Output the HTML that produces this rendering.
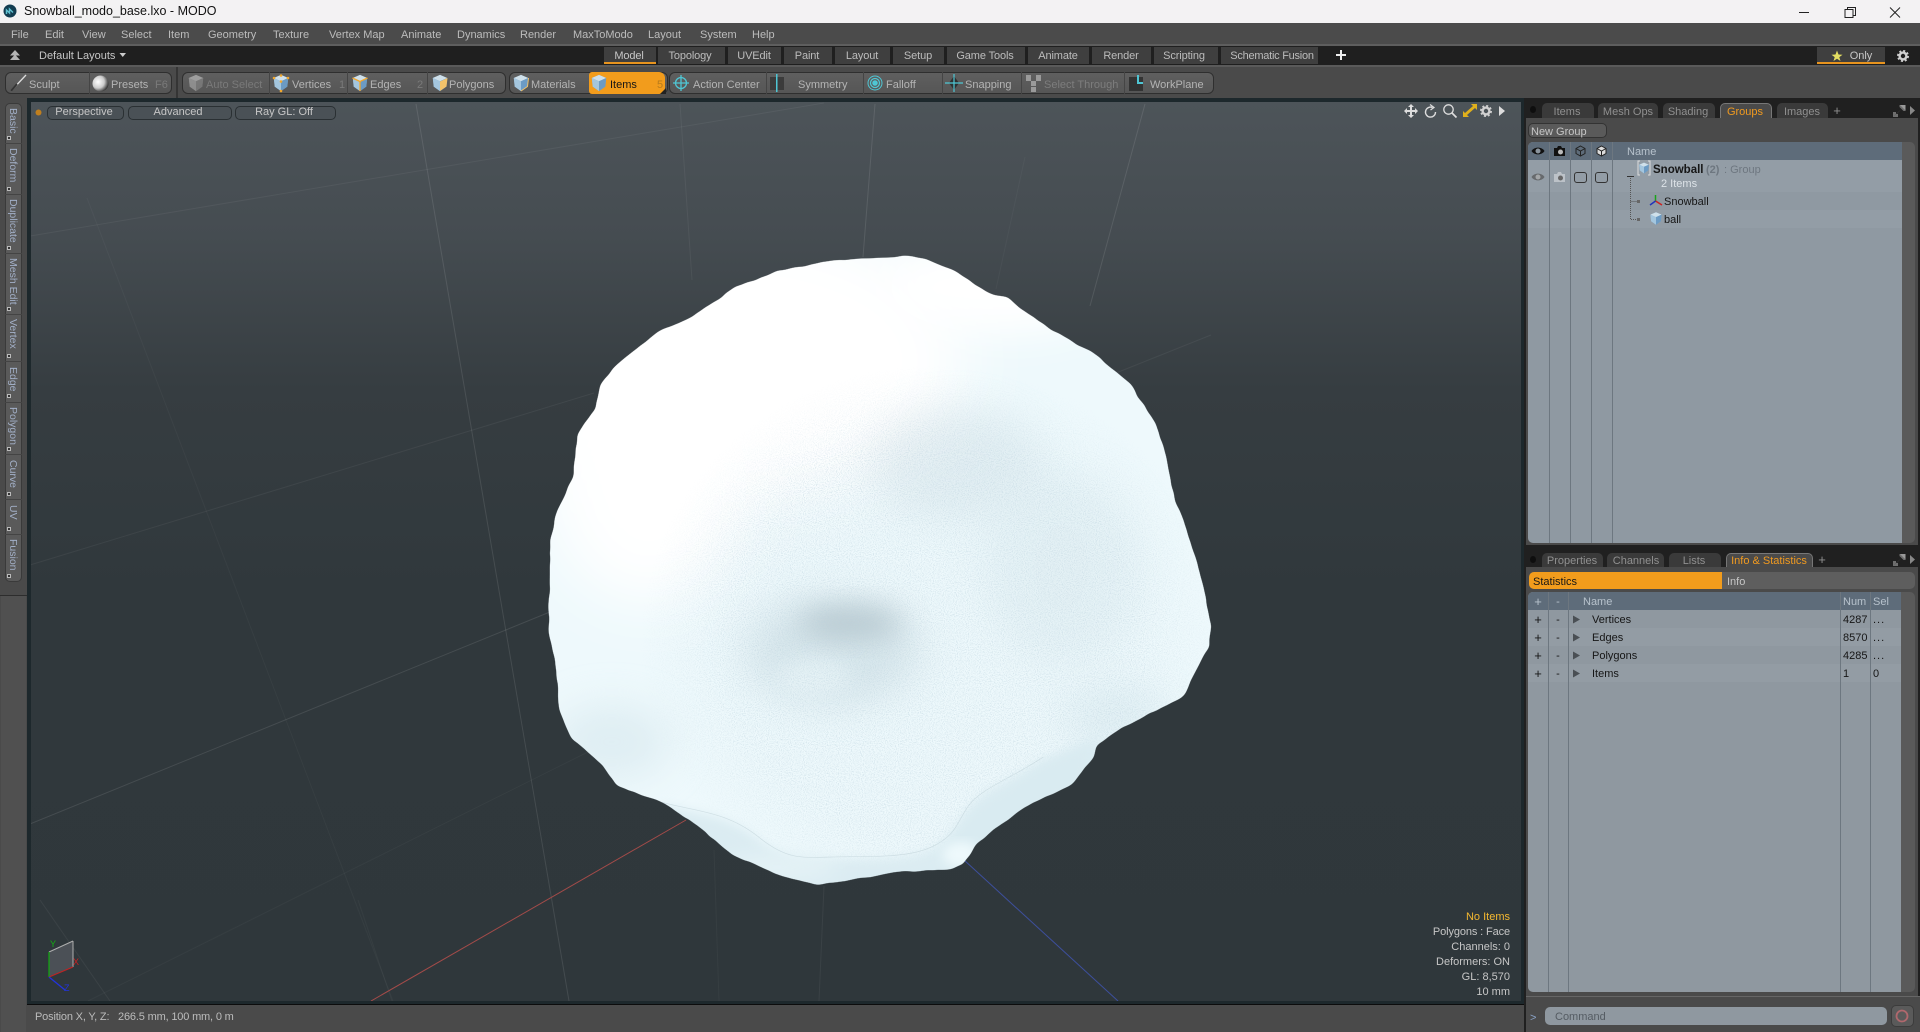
<!DOCTYPE html>
<html><head><meta charset="utf-8"><title>Snowball_modo_base.lxo - MODO</title>
<style>
html,body{margin:0;padding:0;background:#3a3a3a}
#r{position:relative;width:1920px;height:1032px;overflow:hidden;background:#4a4a4a;font:11px "Liberation Sans",sans-serif;color:#bcbcbc}
.a{position:absolute}
.t{position:absolute;white-space:nowrap;line-height:14px;margin-top:1px}
.c{transform:translateX(-50%)}
.w{color:#c6c6c6}
.d{color:#7a7a7a}
.k{color:#161616}
.lt{letter-spacing:-.12px}
.ltab{position:absolute;left:8px;writing-mode:vertical-rl;white-space:nowrap;color:#a3b0c8;line-height:10px;font-size:10.5px}
.sq{position:absolute;left:7px;width:2px;height:2px;border:1px solid #bbb;background:#333}
.sp{position:absolute;top:72px;height:22px;width:1px;background:#454545}
.tb{position:absolute;top:72px;height:20px;background:linear-gradient(#5f5f5f,#565656);border:1px solid #2f2f2f;border-radius:6px}
.ls{position:absolute;top:47px;height:17px;background:#3f3f3f}
.pill{position:absolute;top:106px;height:12px;border:1px solid #2a3033;background:#4a5156;border-radius:5px}
.rt{position:absolute;background:#3a3a3a;border-radius:5px 5px 0 0}
.col{position:absolute;width:1px;background:#6d7780}
svg{position:absolute;overflow:visible}
</style></head><body><div id="r">

<svg width="0" height="0" style="left:0;top:0">
<defs>
<symbol id="cube" viewBox="0 0 20 20" overflow="visible">
<polygon points="10,1 18,4.5 17,14 10,19 3,14 2,4.5" fill="#7faacd"/>
<polygon points="10,1 18,4.5 10,8 2,4.5" fill="#cfe0ea"/>
<polygon points="10,8 18,4.5 17,14 10,19" fill="#6c9bc4"/>
<polygon points="10,8 2,4.5 3,14 10,19" fill="#a4c6de"/>
</symbol>
<symbol id="gear" viewBox="0 0 12 12" overflow="visible">
<circle cx="6" cy="6" r="3.4" fill="none" stroke="#d0d0d0" stroke-width="2.4"/>
<circle cx="6" cy="6" r="5" fill="none" stroke="#d0d0d0" stroke-width="2" stroke-dasharray="2 1.93"/>
</symbol>
<symbol id="exp" viewBox="0 0 14 14" overflow="visible">
<path d="M1 13V8h3v2.500L9.500 5 7.500 3V1h6v6h-2l-2-2M1 13h5v-3H4" fill="#6f6f6f"/>
<path d="M8 1h5.500v5.500L11.500 4.500 9.500 2.500z" fill="#9a9a9a"/>
</symbol>
<filter id="organic" x="-5%" y="-5%" width="110%" height="110%" color-interpolation-filters="sRGB">
<feTurbulence type="fractalNoise" baseFrequency="0.04" numOctaves="3" seed="7" result="n"/>
<feDisplacementMap in="SourceGraphic" in2="n" scale="6" xChannelSelector="R" yChannelSelector="G" result="d"/>
<feGaussianBlur in="d" stdDeviation="6"/>
<feComponentTransfer><feFuncA type="linear" slope="10" intercept="-4.5"/></feComponentTransfer>
</filter>
<mask id="ballmask" maskUnits="userSpaceOnUse" x="-50" y="-50" width="1700" height="1700">
<path fill="#fff" filter="url(#organic)" d="M680 70 L760 65 840 60 880 66 950 95 990 125 1030 150 1060 155 1150 225 1250 285 1330 355 1385 450 1405 510 1425 620 1445 670 1475 770 1490 830 1505 915 1500 960 1465 1030 1445 1075 1300 1155 1255 1190 1250 1215 1200 1280 1100 1330 1030 1385 990 1420 965 1465 930 1475 820 1480 740 1495 650 1510 570 1490 460 1440 390 1375 310 1320 210 1280 180 1235 110 1170 85 1105 80 1020 62 920 65 800 65 720 80 650 115 570 125 470 165 410 175 355 210 310 300 235 375 200 470 130 560 95Z"/>
</mask>
<filter id="b20" x="-60%" y="-60%" width="220%" height="220%"><feGaussianBlur stdDeviation="22"/></filter>
<filter id="b30" x="-60%" y="-60%" width="220%" height="220%"><feGaussianBlur stdDeviation="32"/></filter>
<filter id="b40" x="-60%" y="-60%" width="220%" height="220%"><feGaussianBlur stdDeviation="45"/></filter>
<filter id="b70" x="-50%" y="-50%" width="200%" height="200%"><feGaussianBlur stdDeviation="70"/></filter>
<filter id="b10" x="-20%" y="-20%" width="140%" height="140%"><feGaussianBlur stdDeviation="12"/></filter>
<filter id="grain" x="0" y="0" width="100%" height="100%">
<feTurbulence type="fractalNoise" baseFrequency="0.42" numOctaves="2" seed="4"/>
<feColorMatrix values="0 0 0 0 .5  0 0 0 0 .64  0 0 0 0 .72  3.2 0 0 0 -1.45"/>
</filter>
<radialGradient id="gm" gradientUnits="userSpaceOnUse" cx="900" cy="950" r="640">
<stop offset="0" stop-color="#fff"/><stop offset=".7" stop-color="#fff"/><stop offset="1" stop-color="#000"/>
</radialGradient>
<mask id="gmask" maskUnits="userSpaceOnUse" x="0" y="0" width="1568" height="1568"><rect width="1568" height="1568" fill="url(#gm)"/></mask>
<linearGradient id="vp" x1="0" y1="0" x2="0" y2="1">
<stop offset="0" stop-color="#4d5459"/><stop offset=".15" stop-color="#454c51"/><stop offset=".32" stop-color="#363d41"/><stop offset=".55" stop-color="#30383c"/><stop offset="1" stop-color="#2f373b"/>
</linearGradient>
</defs>
</svg>

<!-- title bar -->
<div class="a" style="left:0;top:0;width:1920px;height:23px;background:#f3f2f3"></div>
<svg style="left:3px;top:4px" width="14" height="14" viewBox="0 0 14 14"><circle cx="7" cy="7" r="6.500" fill="#123c50"/><path d="M3.500 10V6l3 3V5l3.500 3.500" fill="none" stroke="#5fc0d0" stroke-width="1.500"/></svg>
<div class="t" style="left:24px;top:3px;font-size:12.500px;color:#111">Snowball_modo_base.lxo - MODO</div>
<svg style="left:1795px;top:4px" width="120" height="16" fill="none" stroke="#222" stroke-width="1">
<path d="M4 8.500H14"/>
<path d="M50 5.500h8v8h-8zM52.500 5.500V3.500H60.500V11.500H58"/>
<path d="M95 3.500L105 13.500M105 3.500L95 13.500"/>
</svg>

<!-- menu bar -->
<div class="a" style="left:0;top:23px;width:1920px;height:22px;background:#4b4b4b"></div>
<div class="a" style="left:0;top:44px;width:1920px;height:2px;background:#5e5e5e"></div>
<span class="t" style="left:11px;top:27px">File</span>
<span class="t" style="left:45px;top:27px">Edit</span>
<span class="t" style="left:82px;top:27px">View</span>
<span class="t" style="left:121px;top:27px">Select</span>
<span class="t" style="left:168px;top:27px">Item</span>
<span class="t" style="left:208px;top:27px">Geometry</span>
<span class="t" style="left:273px;top:27px">Texture</span>
<span class="t" style="left:329px;top:27px">Vertex Map</span>
<span class="t" style="left:401px;top:27px">Animate</span>
<span class="t" style="left:457px;top:27px">Dynamics</span>
<span class="t" style="left:520px;top:27px">Render</span>
<span class="t" style="left:573px;top:27px">MaxToModo</span>
<span class="t" style="left:648px;top:27px">Layout</span>
<span class="t" style="left:700px;top:27px">System</span>
<span class="t" style="left:752px;top:27px">Help</span>

<!-- layout bar -->
<div class="a" style="left:0;top:46px;width:1920px;height:19px;background:#1f1f1f"></div>
<div class="a" style="left:0;top:65px;width:1920px;height:2px;background:#5a5a5a"></div>
<svg style="left:9px;top:49px" width="12" height="13"><path d="M6 1L11 6.500H1zM6 5.500L11 11H1z" fill="#b5b5b5"/></svg>
<span class="t w" style="left:39px;top:48px">Default Layouts</span>
<svg style="left:119px;top:52px" width="8" height="6"><path d="M0.500 1H7L3.750 5z" fill="#ccc"/></svg>
<div class="ls" style="left:604px;width:52px"></div>
<div class="a" style="left:604px;top:62px;width:52px;height:2px;background:#e8941e"></div>
<div class="ls" style="left:658px;width:67px"></div>
<div class="ls" style="left:728px;width:53px"></div>
<div class="ls" style="left:784px;width:48px"></div>
<div class="ls" style="left:835px;width:55px"></div>
<div class="ls" style="left:893px;width:51px"></div>
<div class="ls" style="left:947px;width:78px"></div>
<div class="ls" style="left:1028px;width:61px"></div>
<div class="ls" style="left:1092px;width:59px"></div>
<div class="ls" style="left:1154px;width:64px"></div>
<div class="ls" style="left:1221px;width:97px"></div>
<span class="t c w lt" style="left:629px;top:48px">Model</span>
<span class="t c lt" style="left:690px;top:48px">Topology</span>
<span class="t c lt" style="left:754px;top:48px">UVEdit</span>
<span class="t c lt" style="left:807px;top:48px">Paint</span>
<span class="t c lt" style="left:862px;top:48px">Layout</span>
<span class="t c lt" style="left:918px;top:48px">Setup</span>
<span class="t c lt" style="left:985px;top:48px">Game Tools</span>
<span class="t c lt" style="left:1058px;top:48px">Animate</span>
<span class="t c lt" style="left:1121px;top:48px">Render</span>
<span class="t c lt" style="left:1184px;top:48px">Scripting</span>
<span class="t c lt" style="left:1272px;top:48px;letter-spacing:-.25px">Schematic Fusion</span>
<svg style="left:1335px;top:49px" width="12" height="12"><path d="M6 1v10M1 6h10" stroke="#eee" stroke-width="2"/></svg>
<div class="ls" style="left:1817px;width:68px"></div>
<div class="a" style="left:1817px;top:62px;width:68px;height:2px;background:#e8941e"></div>
<svg style="left:1831px;top:50px" width="12" height="12"><path d="M6 0.500L7.500 4.500 11.500 4.700 8.300 7.100 9.500 11 6 8.700 2.500 11 3.700 7.100 0.500 4.700 4.500 4.500z" fill="#e3de62"/></svg>
<span class="t c w" style="left:1861px;top:48px">Only</span>
<svg style="left:1897px;top:50px" width="12" height="12"><use href="#gear" width="12" height="12"/></svg>

<!-- toolbar -->
<div class="a" style="left:0;top:67px;width:1920px;height:31px;background:#4a4a4a"></div>
<div class="a" style="left:176px;top:67px;width:2px;height:31px;background:#353535"></div>
<div class="tb" style="left:5px;width:165px"></div>
<div class="tb" style="left:182px;width:322px"></div>
<div class="tb" style="left:509px;width:157px"></div>
<div class="tb" style="left:669px;width:543px"></div>
<div class="sp" style="left:89px"></div><div class="sp" style="left:269px"></div><div class="sp" style="left:347px"></div><div class="sp" style="left:427px"></div>
<div class="sp" style="left:766px"></div><div class="sp" style="left:863px"></div><div class="sp" style="left:942px"></div><div class="sp" style="left:1021px"></div><div class="sp" style="left:1124px"></div>
<div class="a" style="left:589px;top:72px;width:76px;height:22px;background:#f29c1c;border-radius:3px 6px 6px 3px"></div>
<svg style="left:660px;top:88px" width="6" height="6"><path d="M6 0V6H0z" fill="#222"/></svg>

<svg style="left:10px;top:74px" width="18" height="18"><path d="M1 17L16 1" stroke="#ddd" stroke-width="1.300"/><path d="M1 17L7 10" stroke="#333" stroke-width="1.800"/></svg>
<span class="t" style="left:29px;top:77px;color:#b4b4b4">Sculpt</span>
<svg style="left:92px;top:75px" width="17" height="17"><defs><radialGradient id="bl" cx=".35" cy=".4" r=".7"><stop offset="0" stop-color="#fff"/><stop offset=".55" stop-color="#ccc"/><stop offset="1" stop-color="#222"/></radialGradient></defs><circle cx="8.500" cy="8.500" r="8" fill="url(#bl)"/></svg>
<span class="t" style="left:111px;top:77px;color:#b4b4b4">Presets</span>
<span class="t d" style="left:155px;top:77px">F6</span>

<svg style="left:187px;top:74px" width="18" height="18" opacity=".5"><g style="filter:grayscale(1)"><use href="#cube" width="18" height="18"/></g></svg>
<span class="t d" style="left:206px;top:77px">Auto Select</span>
<svg style="left:272px;top:74px" width="18" height="18"><use href="#cube" width="18" height="18"/><g fill="#f2a72c"><circle cx="9" cy="1.500" r="1.300"/><circle cx="16" cy="4" r="1.300"/><circle cx="2" cy="4" r="1.300"/><circle cx="9" cy="17" r="1.300"/><circle cx="9" cy="7.500" r="1.300"/></g></svg>
<span class="t" style="left:292px;top:77px;color:#b4b4b4">Vertices</span>
<span class="t d" style="left:339px;top:77px">1</span>
<svg style="left:351px;top:74px" width="18" height="18"><use href="#cube" width="18" height="18"/><path d="M9 7.500V17M9 7.500L16.500 4M9 7.500L1.500 4" stroke="#f2a72c" stroke-width="1.300"/></svg>
<span class="t" style="left:370px;top:77px;color:#b4b4b4">Edges</span>
<span class="t d" style="left:417px;top:77px">2</span>
<svg style="left:431px;top:74px" width="18" height="18"><use href="#cube" width="18" height="18"/><polygon points="9,7.500 16.500,4 15.500,12.500 9,17" fill="#f2c26a"/></svg>
<span class="t" style="left:449px;top:77px;color:#b4b4b4">Polygons</span>
<svg style="left:512px;top:74px" width="18" height="18"><use href="#cube" width="18" height="18"/><path d="M16.500 4L15.500 12.500 9 17" stroke="#f2c26a" fill="none"/></svg>
<span class="t" style="left:531px;top:77px;color:#b4b4b4">Materials</span>
<svg style="left:590px;top:74px" width="18" height="18"><use href="#cube" width="18" height="18"/></svg>
<span class="t k" style="left:610px;top:77px">Items</span>
<span class="t" style="left:657px;top:77px;color:#b87c1c">5</span>

<svg style="left:673px;top:75px" width="16" height="16" fill="none" stroke="#4fc6d4" stroke-width="1.300"><circle cx="8" cy="8" r="5.500"/><path d="M8 0V16M0 8H16"/></svg>
<span class="t" style="left:693px;top:77px;color:#b4b4b4">Action Center</span>
<svg style="left:770px;top:74px" width="16" height="18"><rect x="0" y="3" width="14" height="13" fill="#3b3b3b"/><rect x="6" y="0" width="1.500" height="18" fill="#4fc6d4"/></svg>
<span class="t" style="left:798px;top:77px;color:#b4b4b4">Symmetry</span>
<svg style="left:867px;top:75px" width="16" height="16" fill="none" stroke="#4fc6d4"><circle cx="8" cy="8" r="7"/><circle cx="8" cy="8" r="4.500" stroke-width="1.300"/><circle cx="8" cy="8" r="2.300" fill="#4fc6d4"/></svg>
<span class="t" style="left:886px;top:77px;color:#b4b4b4">Falloff</span>
<svg style="left:945px;top:74px" width="18" height="18"><path d="M9 2L14 9 9 16 4 9z" fill="#2f2f2f"/><path d="M9 0V18M0 9H18" stroke="#4fc6d4" stroke-width="1.200"/></svg>
<span class="t" style="left:965px;top:77px;color:#b4b4b4">Snapping</span>
<svg style="left:1025px;top:74px" width="18" height="18" fill="#9a9a9a"><rect x="1" y="1" width="5" height="6"/><rect x="11" y="1" width="5" height="6"/><rect x="6" y="7" width="5" height="5"/><rect x="6" y="13" width="5" height="5"/></svg>
<span class="t" style="left:1044px;top:77px;color:#7d7d7d">Select Through</span>
<svg style="left:1129px;top:75px" width="16" height="16"><rect x="0" y="2" width="14" height="14" fill="#333"/><path d="M9 0V8H14" fill="none" stroke="#4fc6d4" stroke-width="2"/></svg>
<span class="t" style="left:1150px;top:77px;color:#b4b4b4">WorkPlane</span>

<!-- left tabs panel -->
<div class="a" style="left:0;top:98px;width:27px;height:934px;background:#4a4a4a"></div>
<div class="a" style="left:5px;top:103px;width:17px;height:479px;background:#5a5a5a;border:1px solid #3a3a3a;box-sizing:border-box;border-radius:5px"></div>
<div class="a" style="left:0;top:595px;width:27px;height:1px;background:#2d2d2d"></div>
<div class="a" style="left:1px;top:596px;width:25px;height:436px;background:#505050"></div>
<div class="a" style="left:5px;top:143px;width:17px;height:1px;background:#444"></div>
<div class="a" style="left:5px;top:194px;width:17px;height:1px;background:#444"></div>
<div class="a" style="left:5px;top:253px;width:17px;height:1px;background:#444"></div>
<div class="a" style="left:5px;top:314px;width:17px;height:1px;background:#444"></div>
<div class="a" style="left:5px;top:361px;width:17px;height:1px;background:#444"></div>
<div class="a" style="left:5px;top:402px;width:17px;height:1px;background:#444"></div>
<div class="a" style="left:5px;top:454px;width:17px;height:1px;background:#444"></div>
<div class="a" style="left:5px;top:499px;width:17px;height:1px;background:#444"></div>
<div class="a" style="left:5px;top:534px;width:17px;height:1px;background:#444"></div>
<span class="ltab" style="top:108px">Basic</span>
<span class="ltab" style="top:148px">Deform</span>
<span class="ltab" style="top:199px">Duplicate</span>
<span class="ltab" style="top:258px">Mesh Edit</span>
<span class="ltab" style="top:319px">Vertex</span>
<span class="ltab" style="top:367px">Edge</span>
<span class="ltab" style="top:407px">Polygon</span>
<span class="ltab" style="top:460px">Curve</span>
<span class="ltab" style="top:505px">UV</span>
<span class="ltab" style="top:539px">Fusion</span>
<i class="sq" style="top:136px"></i><i class="sq" style="top:187px"></i><i class="sq" style="top:246px"></i><i class="sq" style="top:307px"></i><i class="sq" style="top:354px"></i><i class="sq" style="top:394px"></i><i class="sq" style="top:447px"></i><i class="sq" style="top:492px"></i><i class="sq" style="top:527px"></i><i class="sq" style="top:574px"></i>

<!-- viewport -->
<div class="a" style="left:27px;top:98px;width:1497px;height:907px;background:#1d282c"></div>
<div class="a" style="left:31px;top:102px;width:1490px;height:899px;overflow:hidden">
<svg style="left:-31px;top:-102px" width="1920" height="1032">
<rect x="31" y="102" width="1490" height="899" fill="url(#vp)"/>
<g fill="none" stroke-width="1">
<g stroke="#fff" stroke-opacity=".1">
<path d="M416 104L569 1001"/><path d="M875 104L863 257"/><path d="M1145 104L1090 306"/>
<path d="M30 824L594 594"/>
</g>
<g stroke="#fff" stroke-opacity=".055">
<path d="M30 236L824 103"/><path d="M680 104L692 280"/><path d="M30 565L594 393"/><path d="M1116 373L1211 335"/><path d="M40 900L110 1001"/><path d="M824 886L819 1001"/>
</g>
<g stroke="#fff" stroke-opacity=".035">
<path d="M87 198L393 1001"/><path d="M88 1001L594 749"/><path d="M1025 157L996 289"/><path d="M358 900L392 1001"/><path d="M714 850L719 1001"/>
</g>
<path d="M371 1001L686 820" stroke="#a34b49"/>
<path d="M964 860L1118 1001" stroke="#3d4f9c"/>
</g>
<!-- gizmo -->
<polygon points="49,952 73,941 73,967 49,977" fill="#4b5056"/>
<path d="M49 952L73 941M73 941V967" stroke="#aeaeae" fill="none"/>
<path d="M49 952V977" stroke="#12a312" stroke-width="1.300"/>
<path d="M49 977L73 967" stroke="#c22222" stroke-width="1"/>
<path d="M49 977L65 990" stroke="#2233dd" stroke-width="1.300"/>
<!-- snowball -->
<g transform="translate(520 230) scale(.4592 .4337)">
<g mask="url(#ballmask)">
<rect x="-50" y="-50" width="1700" height="1700" fill="#eef9fc"/>
<ellipse cx="450" cy="300" rx="520" ry="330" fill="#fff" filter="url(#b70)"/>
<ellipse cx="1050" cy="130" rx="260" ry="110" fill="#fff" filter="url(#b40)"/>
<ellipse cx="280" cy="580" rx="220" ry="280" fill="#fff" filter="url(#b70)"/>
<ellipse cx="950" cy="540" rx="190" ry="130" fill="#c0d2da" opacity=".26" filter="url(#b40)"/>
<ellipse cx="1180" cy="780" rx="170" ry="220" fill="#dcebf0" opacity=".5" filter="url(#b40)"/>
<ellipse cx="680" cy="970" rx="190" ry="125" fill="#c8dae1" opacity=".6" filter="url(#b40)"/>
<ellipse cx="720" cy="905" rx="115" ry="38" fill="#a3b5bd" opacity=".6" filter="url(#b30)"/>
<ellipse cx="640" cy="1030" rx="80" ry="45" fill="#eef9fc" opacity=".6" filter="url(#b20)"/>
<ellipse cx="1300" cy="1120" rx="120" ry="70" fill="#d4e6ec" opacity=".5" filter="url(#b40)"/>
<ellipse cx="200" cy="1180" rx="130" ry="90" fill="#d0e3ea" opacity=".5" filter="url(#b40)"/>
<g mask="url(#gmask)"><rect width="1568" height="1568" filter="url(#grain)" opacity=".5"/></g>
<path d="M310 1325C380 1345 450 1345 520 1405S620 1450 720 1450 870 1445 910 1420 950 1375 975 1335 1060 1275 1140 1220L1260 1165 1320 1600 200 1600Z" fill="#dbecf2" filter="url(#b10)"/>
<path d="M990 1340L1140 1235 1250 1190 1210 1280 1100 1340 990 1450 930 1470 915 1430 960 1375Z" fill="#d9ebf1" filter="url(#b10)"/>
<ellipse cx="960" cy="1440" rx="40" ry="30" fill="#eef9fc" filter="url(#b10)"/>
<ellipse cx="560" cy="1470" rx="130" ry="30" fill="#e4f2f6" filter="url(#b20)"/>
<path d="M310 1320C380 1340 450 1340 520 1400S620 1445 720 1445 870 1440 910 1415 950 1370 975 1330 1060 1270 1140 1215" fill="none" stroke="#a4b8c0" stroke-width="1.500" opacity=".35"/>
</g>
</g>
</svg>
</div>
<div class="a" style="left:27px;top:1004px;width:1497px;height:1px;background:#0c0c0c"></div>

<!-- viewport header -->
<svg style="left:35px;top:109px" width="7" height="7"><circle cx="3.500" cy="3.500" r="3" fill="#c07f1e"/></svg>
<div class="pill" style="left:47px;width:75px"></div>
<div class="pill" style="left:128px;width:102px"></div>
<div class="pill" style="left:235px;width:99px"></div>
<span class="t c w" style="left:84px;top:104px">Perspective</span>
<span class="t c w" style="left:178px;top:104px">Advanced</span>
<span class="t c w" style="left:284px;top:104px">Ray GL: Off</span>
<svg style="left:1404px;top:104px" width="14" height="14"><path d="M7 0L10 3H8V6H11V4L14 7 11 10V8H8V11H10L7 14 4 11H6V8H3V10L0 7 3 4V6H6V3H4z" fill="#ddd"/></svg>
<svg style="left:1424px;top:104px" width="13" height="14" fill="none" stroke="#ddd" stroke-width="1.400"><path d="M8.500 3.500A5 5 0 1 0 11.500 8"/><path d="M6 0.500L10 3.500 6.500 6" stroke-width="1.200"/></svg>
<svg style="left:1443px;top:104px" width="14" height="14" fill="none" stroke="#ddd" stroke-width="1.300"><circle cx="5.500" cy="5.500" r="4.700"/><path d="M9 9L13.500 13.500" stroke-width="1.700"/></svg>
<svg style="left:1463px;top:104px" width="14" height="14" fill="#e0b01c"><path d="M8 0H14V6L12 4 4 11 6 13H0V7L2 9 10 2z"/></svg>
<svg style="left:1480px;top:105px" width="12" height="12"><use href="#gear" width="12" height="12"/></svg>
<svg style="left:1499px;top:106px" width="7" height="10"><path d="M0 0L6 5 0 10z" fill="#ddd"/></svg>

<!-- viewport info -->
<span class="t" style="right:410px;top:909px;color:#f5b830">No Items</span>
<span class="t w lt" style="right:410px;top:924px">Polygons : Face</span>
<span class="t w" style="right:410px;top:939px">Channels: 0</span>
<span class="t w" style="right:410px;top:954px">Deformers: ON</span>
<span class="t w" style="right:410px;top:969px">GL: 8,570</span>
<span class="t w" style="right:410px;top:984px">10 mm</span>
<span class="t" style="left:50px;top:938px;font-size:9px;color:#12b012;line-height:10px">Y</span>
<span class="t" style="left:73px;top:956px;font-size:9px;color:#c22;line-height:10px">X</span>
<span class="t" style="left:64px;top:982px;font-size:9px;color:#23d;line-height:10px">Z</span>

<!-- status bar -->
<div class="a" style="left:27px;top:1005px;width:1497px;height:27px;background:#4a4a4a"></div>
<span class="t" style="left:35px;top:1009px;color:#bcbcbc;letter-spacing:-.17px">Position X, Y, Z: &nbsp; 266.5 mm, 100 mm, 0 m</span>

<!-- right panel background -->
<div class="a" style="left:1524px;top:98px;width:396px;height:934px;background:#202020"></div>
<div class="a" style="left:1526px;top:118px;width:392px;height:427px;background:#4a4a4a"></div>
<div class="a" style="left:1526px;top:567px;width:392px;height:430px;background:#4a4a4a"></div>
<div class="a" style="left:1526px;top:997px;width:394px;height:35px;background:#4a4a4a"></div>

<!-- upper tabs -->
<div class="a" style="left:1530px;top:106px;width:6px;height:7px;border-radius:50%;background:#0e0e0e"></div>
<div class="rt" style="left:1542px;top:103px;width:52px;height:15px"></div>
<div class="rt" style="left:1598px;top:103px;width:60px;height:15px"></div>
<div class="rt" style="left:1663px;top:103px;width:52px;height:15px"></div>
<div class="rt" style="left:1720px;top:103px;width:52px;height:15px;background:#4a4a4a;border:1px solid #777;border-bottom:0;box-sizing:border-box"></div>
<div class="rt" style="left:1777px;top:103px;width:51px;height:15px"></div>
<span class="t c" style="left:1567px;top:104px;color:#909090">Items</span>
<span class="t c" style="left:1628px;top:104px;color:#909090">Mesh Ops</span>
<span class="t c" style="left:1688px;top:104px;color:#909090">Shading</span>
<span class="t c" style="left:1745px;top:104px;color:#f09a20">Groups</span>
<span class="t c" style="left:1802px;top:104px;color:#909090">Images</span>
<span class="t c" style="left:1837px;top:103px;color:#909090;font-size:13px">+</span>
<svg style="left:1892px;top:104px" width="14" height="14"><use href="#exp" width="14" height="14"/></svg>
<svg style="left:1910px;top:106px" width="6" height="9"><path d="M0 0L5 4.500 0 9z" fill="#888"/></svg>

<!-- New Group -->
<div class="a" style="left:1528px;top:123px;width:79px;height:15px;background:#5a5a5a;border:1px solid #333;box-sizing:border-box;border-radius:5px"></div>
<span class="t w" style="left:1531px;top:124px">New Group</span>

<!-- groups list -->
<div class="a" style="left:1528px;top:142px;width:387px;height:401px;background:#5a5a5a;border-radius:5px;overflow:hidden">
<div class="a" style="left:0;top:0;width:374px;height:401px;background:#8f99a2"></div>
<div class="a" style="left:0;top:0;width:374px;height:18px;background:#5e6c7a"></div>
<div class="a" style="left:0;top:18px;width:374px;height:32px;background:#939da6"></div>
<div class="a" style="left:0;top:68px;width:374px;height:18px;background:#939da6"></div>
<div class="col" style="left:21px;top:0;height:401px"></div>
<div class="col" style="left:42px;top:0;height:401px"></div>
<div class="col" style="left:63px;top:0;height:401px"></div>
<div class="col" style="left:84px;top:0;height:401px"></div>
</div>
<span class="t" style="left:1627px;top:144px;color:#b7c2cc">Name</span>
<svg style="left:1531px;top:145px" width="14" height="12"><path d="M0.500 6C3 1.500 11 1.500 13.500 6 11 10.500 3 10.500 0.500 6Z" fill="#111"/><circle cx="7" cy="6" r="2.500" fill="#8a949d"/></svg>
<svg style="left:1553px;top:145px" width="13" height="12"><path d="M1 3H4L5 1H8L9 3H12V11H1Z" fill="#111"/><circle cx="7.500" cy="7" r="2.500" fill="#bbb"/></svg>
<svg style="left:1575px;top:145px" width="11" height="12" fill="none" stroke="#222"><path d="M5.500 1L10 3.500V8.500L5.500 11 1 8.500V3.500ZM5.500 6V11M1 3.500L5.500 6 10 3.500"/></svg>
<svg style="left:1596px;top:145px" width="11" height="12"><path d="M5.500 1L10 3.500V8.500L5.500 11 1 8.500V3.500Z" fill="#ddd" stroke="#222"/><path d="M5.500 6V11M1 3.500L5.500 6 10 3.500" fill="none" stroke="#222"/></svg>
<svg style="left:1531px;top:171px" width="14" height="12" opacity=".7"><path d="M0.500 6C3 1.500 11 1.500 13.500 6 11 10.500 3 10.500 0.500 6Z" fill="#555"/><circle cx="7" cy="6" r="2.500" fill="#aaa"/></svg>
<svg style="left:1553px;top:171px" width="13" height="12"><path d="M1 3H4L5 1H8L9 3H12V11H1Z" fill="#bcc2c8"/><circle cx="7.500" cy="7" r="2.500" fill="#666"/></svg>
<div class="a" style="left:1574px;top:172px;width:13px;height:11px;border:1px solid #333;box-sizing:border-box;border-radius:3px"></div>
<div class="a" style="left:1595px;top:172px;width:13px;height:11px;border:1px solid #333;box-sizing:border-box;border-radius:3px"></div>
<svg style="left:1625px;top:160px" width="40" height="68" fill="none"><path d="M2 16.500H9" stroke="#333"/><path d="M5.500 18V59.500H12M5.500 41.500H12" stroke="#555" stroke-dasharray="1 1"/><rect x="12" y="40" width="3" height="3" fill="#666"/><rect x="12" y="58" width="3" height="3" fill="#666"/></svg>
<svg style="left:1637px;top:160px" width="14" height="16"><use href="#cube" x="1" y="1" width="12" height="14"/><path d="M3 1H1V15H3M11 1H13V15H11" fill="none" stroke="#ddd"/></svg>
<span class="t k" style="left:1653px;top:162px;font-weight:bold;font-size:11.500px">Snowball</span>
<span class="t" style="left:1706px;top:162px;color:#6e7780;font-weight:bold">(2)</span>
<span class="t" style="left:1724px;top:162px;color:#6e7780">: Group</span>
<span class="t" style="left:1661px;top:176px;color:#dde3e8">2 Items</span>
<svg style="left:1649px;top:194px" width="14" height="14"><path d="M6.500 7V1" stroke="#1aa31a" stroke-width="1.500"/><path d="M6.500 7L13 11" stroke="#c22" stroke-width="1.500"/><path d="M6.500 7L1 11" stroke="#23b" stroke-width="1.500"/></svg>
<span class="t k" style="left:1664px;top:194px">Snowball</span>
<svg style="left:1649px;top:211px" width="14" height="15"><use href="#cube" width="14" height="15"/></svg>
<span class="t k" style="left:1664px;top:212px">ball</span>

<!-- lower tabs -->
<div class="a" style="left:1530px;top:556px;width:6px;height:7px;border-radius:50%;background:#0e0e0e"></div>
<div class="rt" style="left:1542px;top:553px;width:61px;height:14px"></div>
<div class="rt" style="left:1607px;top:553px;width:57px;height:14px"></div>
<div class="rt" style="left:1669px;top:553px;width:52px;height:14px"></div>
<div class="rt" style="left:1726px;top:553px;width:87px;height:14px;background:#4a4a4a;border:1px solid #777;border-bottom:0;box-sizing:border-box"></div>
<span class="t c" style="left:1572px;top:553px;color:#909090">Properties</span>
<span class="t c" style="left:1636px;top:553px;color:#909090">Channels</span>
<span class="t c" style="left:1694px;top:553px;color:#909090">Lists</span>
<span class="t c" style="left:1769px;top:553px;color:#f09a20">Info &amp; Statistics</span>
<span class="t c" style="left:1822px;top:552px;color:#909090;font-size:13px">+</span>
<svg style="left:1892px;top:553px" width="14" height="14"><use href="#exp" width="14" height="14"/></svg>
<svg style="left:1910px;top:555px" width="6" height="9"><path d="M0 0L5 4.500 0 9z" fill="#888"/></svg>

<!-- stats switch -->
<div class="a" style="left:1529px;top:572px;width:386px;height:17px;background:#5e5e5e;border-radius:5px"></div>
<div class="a" style="left:1529px;top:572px;width:193px;height:17px;background:#f29c1c;border-radius:5px 0 0 5px"></div>
<span class="t k" style="left:1533px;top:574px">Statistics</span>
<span class="t w" style="left:1727px;top:574px">Info</span>

<!-- stats list -->
<div class="a" style="left:1528px;top:592px;width:387px;height:400px;background:#5a5a5a;border-radius:5px;overflow:hidden">
<div class="a" style="left:0;top:0;width:373px;height:400px;background:#8f98a0"></div>
<div class="a" style="left:0;top:0;width:373px;height:18px;background:#5e6c7a"></div>
<div class="a" style="left:0;top:36px;width:373px;height:18px;background:#939ca4"></div>
<div class="a" style="left:0;top:72px;width:373px;height:18px;background:#939ca4"></div>
<div class="col" style="left:20px;top:0;height:400px"></div>
<div class="col" style="left:40px;top:0;height:400px"></div>
<div class="col" style="left:312px;top:0;height:400px"></div>
<div class="col" style="left:342px;top:0;height:400px"></div>
</div>
<span class="t c" style="left:1538px;top:594px;color:#b7c2cc;font-size:13px">+</span>
<span class="t c" style="left:1558px;top:594px;color:#b7c2cc">-</span>
<span class="t" style="left:1583px;top:594px;color:#b7c2cc">Name</span>
<span class="t" style="left:1843px;top:594px;color:#b7c2cc">Num</span>
<span class="t" style="left:1873px;top:594px;color:#b7c2cc">Sel</span>
<span class="t c k" style="left:1538px;top:612px;font-size:13px">+</span><span class="t c k" style="left:1558px;top:612px">-</span>
<span class="t c k" style="left:1538px;top:630px;font-size:13px">+</span><span class="t c k" style="left:1558px;top:630px">-</span>
<span class="t c k" style="left:1538px;top:648px;font-size:13px">+</span><span class="t c k" style="left:1558px;top:648px">-</span>
<span class="t c k" style="left:1538px;top:666px;font-size:13px">+</span><span class="t c k" style="left:1558px;top:666px">-</span>
<svg style="left:1573px;top:615px" width="8" height="9"><path d="M0 0.500L7 4.500 0 8.500z" fill="#4a4f54"/></svg>
<svg style="left:1573px;top:633px" width="8" height="9"><path d="M0 0.500L7 4.500 0 8.500z" fill="#4a4f54"/></svg>
<svg style="left:1573px;top:651px" width="8" height="9"><path d="M0 0.500L7 4.500 0 8.500z" fill="#4a4f54"/></svg>
<svg style="left:1573px;top:669px" width="8" height="9"><path d="M0 0.500L7 4.500 0 8.500z" fill="#4a4f54"/></svg>
<span class="t k" style="left:1592px;top:612px">Vertices</span><span class="t k" style="left:1843px;top:612px">4287</span><span class="t k" style="left:1873px;top:612px;letter-spacing:1px">...</span>
<span class="t k" style="left:1592px;top:630px">Edges</span><span class="t k" style="left:1843px;top:630px">8570</span><span class="t k" style="left:1873px;top:630px;letter-spacing:1px">...</span>
<span class="t k" style="left:1592px;top:648px">Polygons</span><span class="t k" style="left:1843px;top:648px">4285</span><span class="t k" style="left:1873px;top:648px;letter-spacing:1px">...</span>
<span class="t k" style="left:1592px;top:666px">Items</span><span class="t k" style="left:1843px;top:666px">1</span><span class="t k" style="left:1873px;top:666px">0</span>

<!-- command -->
<div class="a" style="left:1526px;top:996px;width:394px;height:1px;background:#666"></div>
<span class="t" style="left:1530px;top:1010px;color:#8aa3c8">&gt;</span>
<div class="a" style="left:1545px;top:1007px;width:342px;height:18px;background:#8f98a0;border-radius:5px"></div>
<span class="t" style="left:1555px;top:1009px;color:#555c63">Command</span>
<div class="a" style="left:1891px;top:1005px;width:23px;height:22px;background:#5a5a5a;border:1px solid #3c3c3c;box-sizing:border-box;border-radius:5px"></div>
<svg style="left:1895px;top:1009px" width="14" height="14"><circle cx="7" cy="7" r="5.500" fill="none" stroke="#b0686d" stroke-width="1.800"/></svg>

</div></body></html>
